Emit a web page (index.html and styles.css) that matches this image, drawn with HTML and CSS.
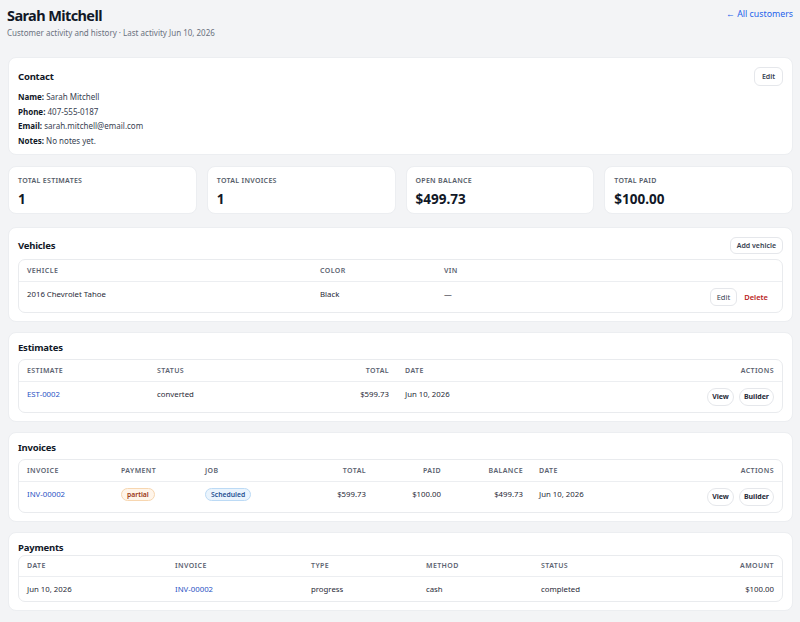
FILE: index.html
```html
<!DOCTYPE html>
<html>

<head>
	<meta charset="utf-8">
	<title>Sarah Mitchell - Customer</title>
	<link rel="stylesheet" href="styles.css">
</head>

<body>
	<div class="page">
		<div class="page-head">
			<div>
				<h1 class="page-title">Sarah Mitchell</h1>
				<div class="page-sub">Customer activity and history · Last activity Jun 10, 2026</div>
			</div>
			<a class="back-link" href="#">← All customers</a>
		</div>

		<!-- contact -->
		<div class="card card-contact">
			<div class="card-head">
				<h2 class="card-title">Contact</h2>
				<button class="btn btn-lg">Edit</button>
			</div>
			<div class="contact-list">
				<div><b>Name:</b> Sarah Mitchell</div>
				<div><b>Phone:</b> 407-555-0187</div>
				<div><b>Email:</b> sarah.mitchell@email.com</div>
				<div><b>Notes:</b> No notes yet.</div>
			</div>
		</div>

		<!-- stats -->
		<div class="stats">
			<div class="stat">
				<div class="stat-label">Total estimates</div>
				<div class="stat-value">1</div>
			</div>
			<div class="stat">
				<div class="stat-label">Total invoices</div>
				<div class="stat-value">1</div>
			</div>
			<div class="stat">
				<div class="stat-label">Open balance</div>
				<div class="stat-value">$499.73</div>
			</div>
			<div class="stat">
				<div class="stat-label">Total paid</div>
				<div class="stat-value">$100.00</div>
			</div>
		</div>

		<!-- vehicles -->
		<div class="card">
			<div class="card-head has-btn">
				<h2 class="card-title">Vehicles</h2>
				<button class="btn">Add vehicle</button>
			</div>
			<div class="table-box">
				<table class="tbl">
					<colgroup>
						<col class="vc-1">
						<col class="vc-2">
						<col>
						<col class="vc-4">
					</colgroup>
					<thead>
						<tr>
							<th>Vehicle</th>
							<th>Color</th>
							<th>VIN</th>
							<th></th>
						</tr>
					</thead>
					<tbody>
						<tr>
							<td class="row-text">2016 Chevrolet Tahoe</td>
							<td class="row-text">Black</td>
							<td class="row-text">—</td>
							<td class="right">
								<button class="btn btn-row">Edit</button>
								<a class="del-link" href="#">Delete</a>
							</td>
						</tr>
					</tbody>
				</table>
			</div>
		</div>

		<!-- estimates -->
		<div class="card">
			<div class="card-head">
				<h2 class="card-title">Estimates</h2>
			</div>
			<div class="table-box">
				<table class="tbl">
					<colgroup>
						<col class="ec-1">
						<col class="ec-2">
						<col class="ec-3">
						<col>
						<col class="ec-5">
					</colgroup>
					<thead>
						<tr>
							<th>Estimate</th>
							<th>Status</th>
							<th class="right">Total</th>
							<th>Date</th>
							<th class="right">Actions</th>
						</tr>
					</thead>
					<tbody>
						<tr>
							<td class="row-text"><a class="link" href="#">EST-0002</a></td>
							<td class="row-text">converted</td>
							<td class="row-text right">$599.73</td>
							<td class="row-text">Jun 10, 2026</td>
							<td class="right">
								<button class="pill">View</button>
								<button class="pill">Builder</button>
							</td>
						</tr>
					</tbody>
				</table>
			</div>
		</div>

		<!-- invoices -->
		<div class="card">
			<div class="card-head">
				<h2 class="card-title">Invoices</h2>
			</div>
			<div class="table-box">
				<table class="tbl">
					<colgroup>
						<col class="ic-1">
						<col class="ic-2">
						<col class="ic-3">
						<col class="ic-4">
						<col class="ic-5">
						<col class="ic-6">
						<col>
						<col class="ic-8">
					</colgroup>
					<thead>
						<tr>
							<th>Invoice</th>
							<th>Payment</th>
							<th>Job</th>
							<th class="right">Total</th>
							<th class="right">Paid</th>
							<th class="right">Balance</th>
							<th>Date</th>
							<th class="right">Actions</th>
						</tr>
					</thead>
					<tbody>
						<tr>
							<td class="row-text"><a class="link" href="#">INV-00002</a></td>
							<td class="row-text"><span class="badge badge-partial">partial</span></td>
							<td class="row-text"><span class="badge badge-sched">Scheduled</span></td>
							<td class="row-text right">$599.73</td>
							<td class="row-text right">$100.00</td>
							<td class="row-text right">$499.73</td>
							<td class="row-text">Jun 10, 2026</td>
							<td class="right">
								<button class="pill">View</button>
								<button class="pill">Builder</button>
							</td>
						</tr>
					</tbody>
				</table>
			</div>
		</div>

		<!-- payments -->
		<div class="card">
			<div class="card-head card-head-tight">
				<h2 class="card-title">Payments</h2>
			</div>
			<div class="table-box">
				<table class="tbl tbl-plain">
					<colgroup>
						<col class="pc-1">
						<col class="pc-2">
						<col class="pc-3">
						<col class="pc-4">
						<col>
						<col class="pc-6">
					</colgroup>
					<thead>
						<tr>
							<th>Date</th>
							<th>Invoice</th>
							<th>Type</th>
							<th>Method</th>
							<th>Status</th>
							<th class="right">Amount</th>
						</tr>
					</thead>
					<tbody>
						<tr>
							<td>Jun 10, 2026</td>
							<td><a class="link" href="#">INV-00002</a></td>
							<td>progress</td>
							<td>cash</td>
							<td>completed</td>
							<td class="right">$100.00</td>
						</tr>
					</tbody>
				</table>
			</div>
		</div>
	</div>
</body>

</html>
```

FILE: styles.css
```css
* {
	box-sizing: border-box;
}

body {
	margin: 0;
	background-color: #f3f4f6;
	font-family: "Segoe UI", "Noto Sans", "Open Sans", sans-serif;
	color: #111827;
	font-size: 8px;
}

.page {
	padding: 5px 7px 10px 8px;
}

.page-head {
	display: flex;
	justify-content: space-between;
	align-items: flex-start;
	margin-bottom: 18px;
}

.page-title {
	margin: 0 0 0 -1px;
	font-size: 14.5px;
	font-weight: 700;
	line-height: 20px;
	letter-spacing: -0.6px;
}

.page-sub {
	margin-top: 2px;
	font-size: 8px;
	line-height: 12px;
	color: #6b7280;
	margin-left: -1px;
}

.back-link {
	margin-top: 3px;
	color: #2563eb;
	font-size: 8.8px;
	line-height: 12px;
	text-decoration: none;
}

.card {
	background-color: #fff;
	border: 1px solid #eceef1;
	border-radius: 8px;
	padding: 9px 9px 8px 9px;
	margin-bottom: 10px;
}

.card-contact {
	padding-bottom: 5px;
}

.card-head {
	display: flex;
	justify-content: space-between;
	align-items: center;
	min-height: 13px;
	margin-bottom: 4px;
}

.card-head.has-btn {
	min-height: 18px;
}

.card-head-tight {
	margin-bottom: 0;
}

.card-title {
	margin: 0;
	font-size: 9.5px;
	line-height: 12px;
	font-weight: 700;
	letter-spacing: -0.2px;
}

.contact-list {
	line-height: 14.7px;
	color: #374151;
	font-size: 8px;
}

.contact-list b {
	color: #111827;
}

.btn {
	background-color: #fff;
	border: 1px solid #e5e7eb;
	border-radius: 6px;
	font-family: inherit;
	font-size: 7px;
	font-weight: 600;
	color: #374151;
	padding: 0 6px;
	height: 17px;
	line-height: 15px;
	cursor: pointer;
}

.btn-lg {
	height: 19px;
	padding: 0 7px;
}

.btn-row {
	height: 18px;
	padding: 0 6px;
	font-weight: 400;
	font-size: 7.5px;
}

.del-link {
	color: #b91c1c;
	font-size: 7.5px;
	font-weight: 600;
	text-decoration: none;
	margin-left: 5px;
	margin-right: 6px;
}

.stats {
	display: grid;
	grid-template-columns: repeat(4, 1fr);
	gap: 10px;
	margin-top: 11px;
	margin-bottom: 13px;
}

.stat {
	background-color: #fff;
	border: 1px solid #eceef1;
	border-radius: 8px;
	padding: 8px 9px;
	height: 48px;
}

.stat-label {
	font-size: 7px;
	line-height: 12px;
	text-transform: uppercase;
	letter-spacing: 0.3px;
	color: #555c68;
	font-weight: 600;
}

.stat-value {
	margin-top: 3px;
	font-size: 13.5px;
	line-height: 18px;
	font-weight: 700;
}

.table-box {
	border: 1px solid #e9ebee;
	border-radius: 7px;
	overflow: hidden;
}

.tbl {
	width: 100%;
	border-collapse: collapse;
	table-layout: fixed;
}

.tbl th {
	text-align: left;
	font-size: 7px;
	line-height: 10px;
	font-weight: 600;
	text-transform: uppercase;
	letter-spacing: 0.4px;
	color: #5b6270;
	height: 22px;
	padding: 0 8px;
	border-bottom: 1px solid #eceef1;
}

.tbl td {
	padding: 0 8px;
	height: 30px;
	line-height: 11px;
	color: #1f2937;
	font-size: 7.8px;
}

.tbl-plain th {
	height: 21px;
}

.tbl-plain td {
	height: 24px;
}

.tbl .row-text {
	padding-bottom: 6px;
}

.tbl .right {
	text-align: right;
}

.link {
	color: #2952c4;
	text-decoration: none;
}

.pill {
	background-color: #fff;
	border: 1px solid #e5e7eb;
	border-radius: 10px;
	font-family: inherit;
	font-size: 7px;
	font-weight: 700;
	color: #1f2937;
	height: 18px;
	line-height: 16px;
	padding: 0 4px;
	margin-left: 3px;
	cursor: pointer;
}

.badge {
	display: inline-block;
	border-radius: 8px;
	font-size: 6.8px;
	font-weight: 600;
	padding: 1px 5px;
	line-height: 9px;
}

.badge-partial {
	background-color: #fff5ea;
	border: 1px solid #f7d6b0;
	color: #9a3412;
}

.badge-sched {
	background-color: #eaf4fd;
	border: 1px solid #bcdaf5;
	color: #1d4f91;
}

/* column widths */
.vc-1 {
	width: 293px;
}

.vc-2 {
	width: 124px;
}

.vc-4 {
	width: 120px;
}

.ec-1 {
	width: 130px;
}

.ec-2 {
	width: 149px;
}

.ec-3 {
	width: 99px;
}

.ec-5 {
	width: 150px;
}

.ic-1 {
	width: 94px;
}

.ic-2 {
	width: 84px;
}

.ic-3 {
	width: 97px;
}

.ic-4 {
	width: 80px;
}

.ic-5 {
	width: 75px;
}

.ic-6 {
	width: 82px;
}

.ic-8 {
	width: 140px;
}

.pc-1 {
	width: 148px;
}

.pc-2 {
	width: 136px;
}

.pc-3 {
	width: 115px;
}

.pc-4 {
	width: 115px;
}

.pc-6 {
	width: 120px;
}
```
